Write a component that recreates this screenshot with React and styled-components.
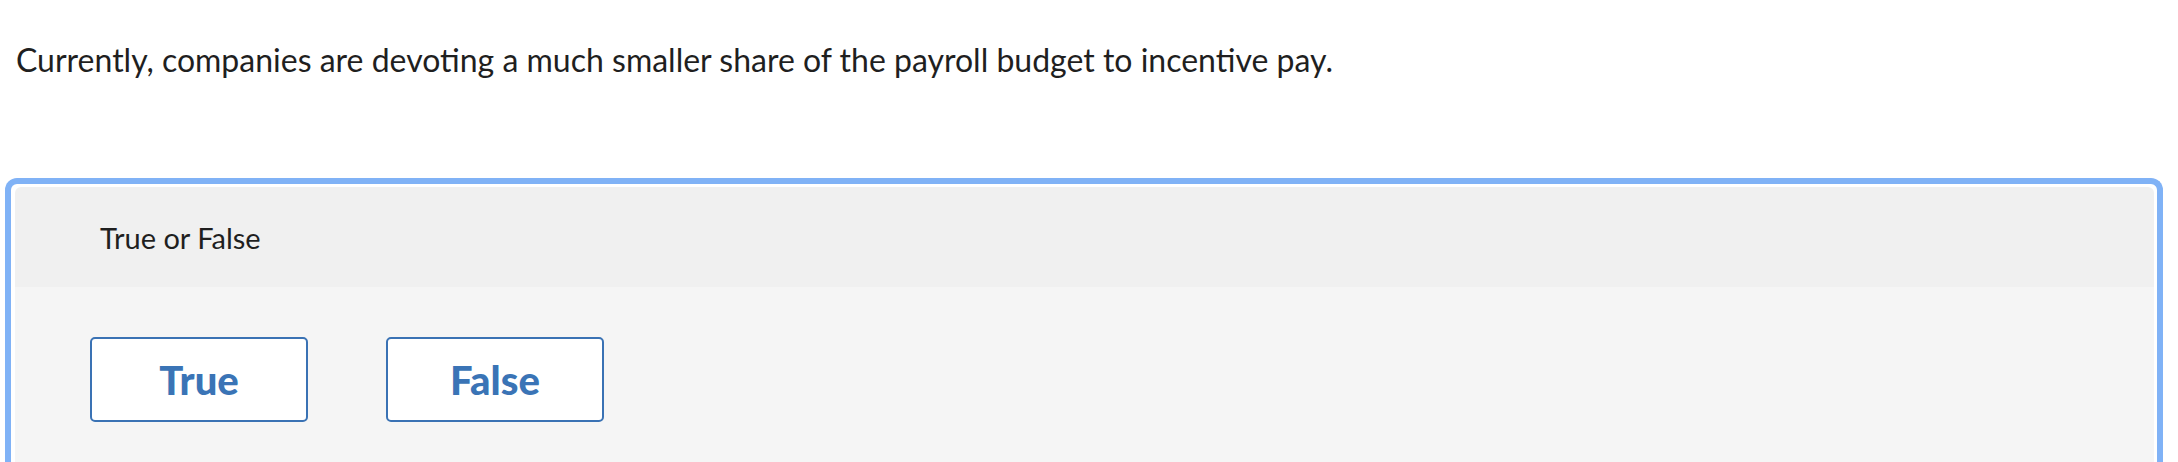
import React from 'react';
import styled, { createGlobalStyle } from 'styled-components';

const GlobalStyle = createGlobalStyle`
  html, body {
    margin: 0;
    padding: 0;
    background: #ffffff;
    font-family: Lato, "Open Sans", sans-serif;
  }
`;

const Page = styled.div`
  width: 2178px;
  height: 462px;
  overflow: hidden;
`;

const Question = styled.p`
  margin: 0;
  padding: 38px 0 0 16px;
  height: 178px;
  box-sizing: border-box;
  font-size: 32px;
  line-height: 44px;
  color: #1f1f1f;
`;

const Panel = styled.div`
  margin: 0 15px 0 5px;
  border: 6px solid #80b2f6;
  border-bottom: none;
  border-radius: 12px 12px 0 0;
  padding: 3px 3px 0 4px;
  background: #ffffff;
`;

const Header = styled.div`
  height: 100px;
  background: #f0f0f0;
  border-radius: 6px 6px 0 0;
  display: flex;
  align-items: center;
  padding-left: 85px;
  font-size: 29px;
  color: #1f1f1f;
`;

const Body = styled.div`
  background: #f5f5f5;
  height: 200px;
  padding: 50px 0 0 75px;
  display: flex;
  gap: 78px;
  align-items: flex-start;
  box-sizing: border-box;
`;

const Choice = styled.button`
  width: 218px;
  height: 85px;
  background: #ffffff;
  border: 2px solid #3a72b4;
  border-radius: 5px;
  color: #3a74b6;
  font-family: Lato, "Open Sans", sans-serif;
  font-weight: 900;
  font-size: 40px;
  cursor: pointer;
  padding: 0;
`;

export default function App() {
  return (
    <Page>
      <GlobalStyle />
      <Question>
        Currently, companies are devoting a much smaller share of the payroll budget to incentive pay.
      </Question>
      <Panel>
        <Header>True or False</Header>
        <Body>
          <Choice>True</Choice>
          <Choice>False</Choice>
        </Body>
      </Panel>
    </Page>
  );
}
